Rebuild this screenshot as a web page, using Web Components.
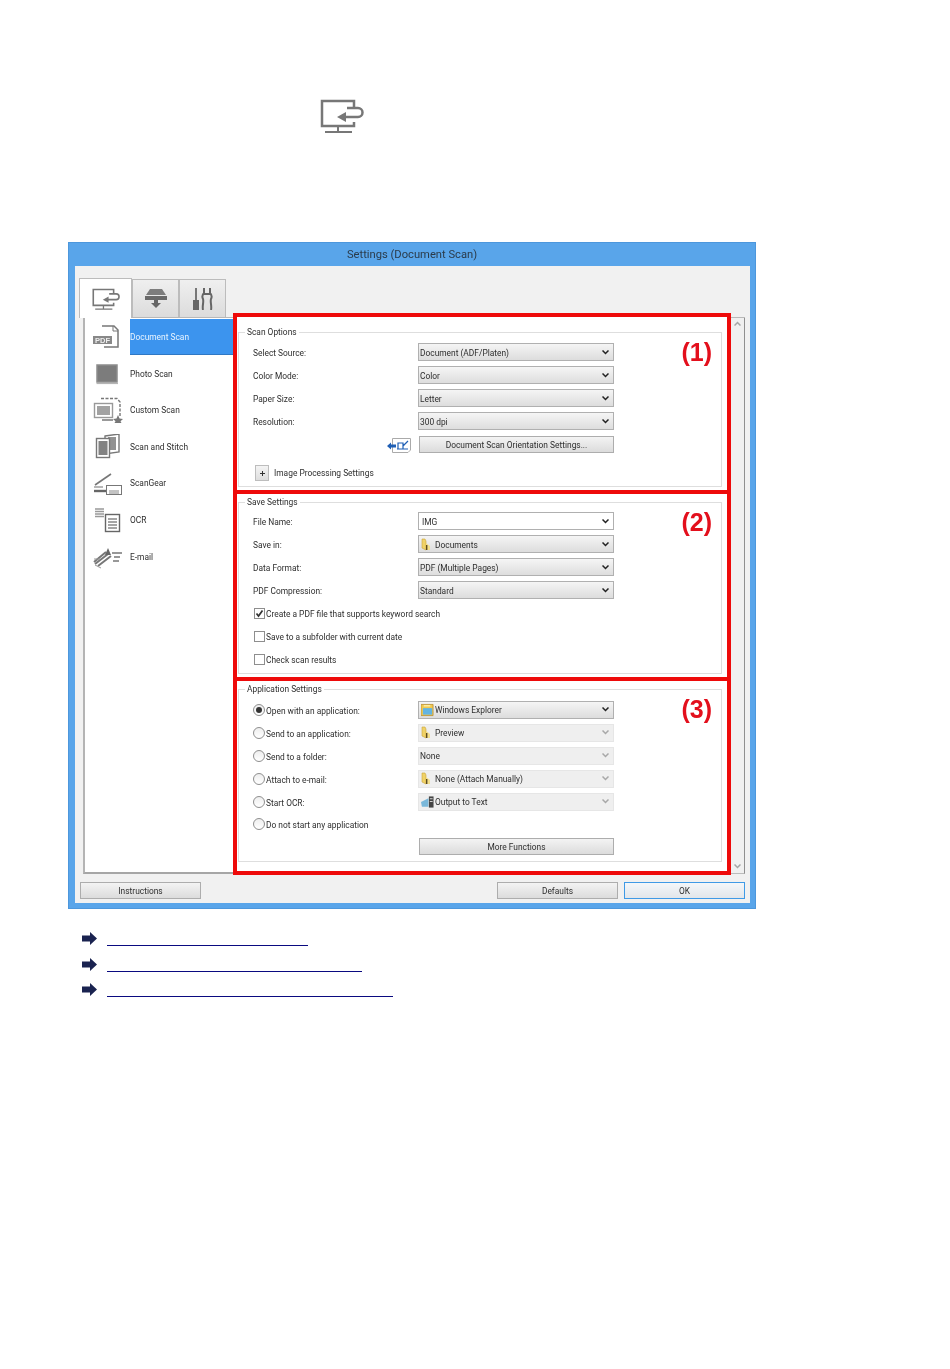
<!DOCTYPE html>
<html lang="en">
<head>
<meta charset="utf-8">
<title>Settings (Document Scan)</title>
<style>
  html, body { margin: 0; background: #fff; }
  body { font: 8.4px Roboto, "Liberation Sans", Arial, sans-serif; color: #2e2e2e; height: 1369px; overflow: hidden; }
</style>
</head>
<body>
<scan-page>
  <settings-window heading="Settings (Document Scan)">
    <side-item slot="side" icon="pdf" selected>Document Scan</side-item>
    <side-item slot="side" icon="photo">Photo Scan</side-item>
    <side-item slot="side" icon="custom">Custom Scan</side-item>
    <side-item slot="side" icon="stitch">Scan and Stitch</side-item>
    <side-item slot="side" icon="gear">ScanGear</side-item>
    <side-item slot="side" icon="ocr">OCR</side-item>
    <side-item slot="side" icon="email">E-mail</side-item>

    <scan-section heading="Scan Options" num="(1)" style="height:181px;--top:8.5px;--gap:2px;--num:21px">
      <scan-field value="Document (ADF/Platen)">Select Source:</scan-field>
      <scan-field value="Color">Color Mode:</scan-field>
      <scan-field value="Letter">Paper Size:</scan-field>
      <scan-field value="300 dpi">Resolution:</scan-field>
      <scan-field action="Document Scan Orientation Settings..." icon="orient"></scan-field>
      <expand-row>Image Processing Settings</expand-row>
    </scan-section>

    <scan-section heading="Save Settings" num="(2)" style="height:191px;margin-top:-4px;--top:1.5px;--gap:1px;--num:14px">
      <scan-field value="IMG" editable>File Name:</scan-field>
      <scan-field value="Documents" icon="folder">Save in:</scan-field>
      <scan-field value="PDF (Multiple Pages)">Data Format:</scan-field>
      <scan-field value="Standard">PDF Compression:</scan-field>
      <scan-option type="check" checked>Create a PDF file that supports keyword search</scan-option>
      <scan-option type="check">Save to a subfolder with current date</scan-option>
      <scan-option type="check">Check scan results</scan-option>
    </scan-section>

    <scan-section heading="Application Settings" num="(3)" style="height:198px;margin-top:-4px;--top:1.5px;--gap:2px;--num:14px;--bottom:9px">
      <scan-field value="Windows Explorer" icon="explorer"><scan-option type="radio" checked>Open with an application:</scan-option></scan-field>
      <scan-field value="Preview" icon="folder" disabled><scan-option type="radio">Send to an application:</scan-option></scan-field>
      <scan-field value="None" disabled><scan-option type="radio">Send to a folder:</scan-option></scan-field>
      <scan-field value="None (Attach Manually)" icon="folder" disabled><scan-option type="radio">Attach to e-mail:</scan-option></scan-field>
      <scan-field value="Output to Text" icon="text" disabled><scan-option type="radio">Start OCR:</scan-option></scan-field>
      <scan-option type="radio">Do not start any application</scan-option>
      <scan-field action="More Functions" style="margin-top:-1px"></scan-field>
    </scan-section>

    <push-button slot="footer" style="margin-right:auto">Instructions</push-button>
    <push-button slot="footer">Defaults</push-button>
    <push-button slot="footer" primary>OK</push-button>
  </settings-window>
  <related-link style="--w:201px"></related-link>
  <related-link style="--w:255px"></related-link>
  <related-link style="--w:286px"></related-link>
</scan-page>

<script>
const ICONS = {
  monitor: `<svg width="44" height="34" viewBox="0 0 44 34" fill="none" stroke="#777" stroke-width="2.5">
    <path d="M34 8V2H2V27H34V23"/><path d="M18 27V33M5 33H32" stroke-width="2"/>
    <path d="M27 9H38a4.5 4.5 0 0 1 0 9H24"/><path d="M17 18L26 13V23Z" fill="#777" stroke="none"/></svg>`,
  scanner: `<svg width="24" height="20" viewBox="0 0 24 20">
    <path d="M6 0H18L22 6H2Z" fill="#7d7d7d"/><rect x="1" y="7" width="22" height="4" fill="#6a6a6a"/>
    <rect x="10" y="11" width="4" height="4" fill="#666"/><path d="M7 14H17L12 19Z" fill="#666"/></svg>`,
  tools: `<svg width="20" height="23" viewBox="0 0 20 23">
    <rect x="0" y="13" width="6" height="10" fill="#666"/><rect x="2" y="1" width="2" height="12" fill="#777"/>
    <path d="M11 1V6C9 8 9 10 10 12C11 15 9 19 10 23M17 1V6C19 8 19 10 18 12C17 15 19 19 18 23M11 7H17" fill="none" stroke="#666" stroke-width="2"/></svg>`,
  pdf: `<svg width="32" height="26" viewBox="0 0 32 26">
    <path d="M10 2H22L26 6V23H12" fill="#fff" stroke="#777" stroke-width="1.5"/><path d="M21 2V7H26" fill="none" stroke="#777"/>
    <rect x="1" y="12" width="19" height="8" fill="#888"/>
    <text x="10.5" y="18.5" font-family="Liberation Sans" font-size="7.5" font-weight="bold" fill="#eee" text-anchor="middle">PDF</text></svg>`,
  photo: `<svg width="32" height="26" viewBox="0 0 32 26">
    <rect x="5" y="4" width="20" height="17" fill="#7c7c7c" stroke="#8c8c8c" stroke-width="1.5"/><path d="M4.5 22.5H26" stroke="#b5b5b5" stroke-width="1.2"/></svg>`,
  custom: `<svg width="32" height="26" viewBox="0 0 32 26" fill="none" stroke="#777">
    <path d="M9 1.5H25L28 5V20" stroke-width="1.4" stroke-dasharray="3 1.5"/>
    <rect x="2.5" y="6.5" width="18" height="14" fill="#fff" stroke="#999" stroke-width="1.4"/><rect x="5" y="9" width="13" height="9" fill="#a2a2a2" stroke="none"/>
    <path d="M10 23H21" stroke="#999" stroke-width="2"/><path d="M26 18L27.5 21.5L31 22L28.5 24.2L29.5 26H22.5L23.5 24.2L21 22L24.5 21.5Z" fill="#777" stroke="none"/></svg>`,
  stitch: `<svg width="32" height="26" viewBox="0 0 32 26">
    <path d="M13 2L27 0V18L13 20Z" fill="#fff" stroke="#777" stroke-width="1.4"/><rect x="16" y="3" width="8" height="13" fill="#929292"/>
    <rect x="4.5" y="4.5" width="13" height="19" fill="#fff" stroke="#777" stroke-width="1.4"/><rect x="6.5" y="7" width="9" height="14" fill="#828282"/></svg>`,
  gear: `<svg width="32" height="26" viewBox="0 0 32 26" fill="none">
    <path d="M3 14L19 3" stroke="#777" stroke-width="1.6"/><path d="M2 16L11 16" stroke="#999" stroke-width="1.4"/>
    <path d="M2 20H15" stroke="#666" stroke-width="2.4"/><rect x="14.5" y="14.5" width="15" height="9" fill="#fff" stroke="#777"/>
    <path d="M17 20H27M17 22H27" stroke="#888"/></svg>`,
  ocr: `<svg width="32" height="26" viewBox="0 0 32 26" fill="none">
    <path d="M3 2H12M3 4.5H12M3 7H12M3 9.5H12" stroke="#999" stroke-width="1.5"/>
    <rect x="13.5" y="7.5" width="14" height="17" fill="#fff" stroke="#666" stroke-width="1.4"/>
    <path d="M16 12H25M16 15H25M16 18H25M16 21H25" stroke="#888" stroke-width="1.4"/></svg>`,
  email: `<svg width="32" height="26" viewBox="0 0 32 26" fill="none">
    <path d="M2 18L14 8M6 22L19 12M3 20L16 10" stroke="#777" stroke-width="2"/><path d="M16 4L19 11H13Z" fill="#666"/>
    <path d="M20 9H30M22 13H28M21 17H27" stroke="#777" stroke-width="1.4"/><path d="M2 15H8M3 21L9 24" stroke="#999"/></svg>`,
  folder: `<svg width="12" height="13" viewBox="0 0 12 13">
    <path d="M1 1H4L5 3V12L1 10Z" fill="#f0d267" stroke="#c9a43b" stroke-width=".6"/><path d="M5 5L9 8V12H5Z" fill="#f4e08f"/><rect x="5" y="7" width="1.4" height="5" fill="#5a4a20"/></svg>`,
  explorer: `<svg width="13" height="14" viewBox="0 0 14 14">
    <path d="M0 1H13V13H0Z" fill="#f2c94f" stroke="#b48a2a" stroke-width=".8"/><rect x="2" y="5" width="10" height="7" fill="#62b4e2"/><path d="M3 2.5H10" stroke="#fff3b0" stroke-width="1.4"/></svg>`,
  text: `<svg width="13" height="12" viewBox="0 0 14 12">
    <path d="M0 6L8 2V11H1Z" fill="#7ab8da"/><rect x="8.5" y="0" width="5" height="12" fill="#444"/><rect x="9.5" y="2" width="3" height="1" fill="#ddd"/><rect x="9.5" y="5" width="3" height="1" fill="#ddd"/></svg>`,
  orient: `<svg width="24" height="16" viewBox="0 0 24 16" style="margin-top:3px">
    <path d="M5.5 .5H23.5V12L21 14.5H5.5Z" fill="#fff" stroke="#aaa"/>
    <path d="M0 8L4 4.5V6.5H9V9.5H4V11.5Z" fill="#1f5fb5"/>
    <path d="M10 11H21M11 11V5H16V11M16 8L21 3" fill="none" stroke="#1f5fb5" stroke-width="1.2"/></svg>`,
  arrow: `<svg width="15" height="13" viewBox="0 0 15 13"><path d="M0 3.5H8V0L15 6.5L8 13V9.5H0Z" fill="#1a2350"/></svg>`,
  chevron: `<svg width="7" height="5" viewBox="0 0 7 5"><path d="M.5 .5L3.5 3.5L6.5 .5" fill="none" stroke="currentColor" stroke-width="1.5"/></svg>`,
  plus: `<svg width="7" height="7" viewBox="0 0 7 7"><path d="M3.5 1V6M1 3.5H6" stroke="#333"/></svg>`,
  tick: `<svg width="9" height="9" viewBox="0 0 9 9"><path d="M1.5 4.5L3.5 7L7.5 1.5" fill="none" stroke="#333" stroke-width="1.7"/></svg>`,
};

// all the small elements look alike: a template string and a shadow root
function shadow(el, html) {
  el.attachShadow({ mode: "open" }).innerHTML = html;
}

class ScanPage extends HTMLElement {
  connectedCallback() {
    shadow(this, `<style>
      :host { display: block; width: 950px; }
      .top { height: 242px; padding: 99px 0 0 320px; box-sizing: border-box; filter: blur(.35px); }
    </style>
    <div class="top">${ICONS.monitor}</div>
    <slot></slot>`);
  }
}

class SettingsWindow extends HTMLElement {
  connectedCallback() {
    shadow(this, `<style>
      :host { display: block; width: 688px; height: 667px; margin: 0 0 23px 68px; box-sizing: border-box;
        background: #59a5ea; border: 1px solid #4d97dc; filter: blur(.35px); }
      .title { height: 23px; display: flex; align-items: center; justify-content: center; font-size: 11.2px; color: #2b3b4a; }
      .client { width: 675px; height: 637px; margin-left: 6px; box-sizing: border-box; background: #f1f1f1; padding: 11px 5px 0; }
      .tabs { display: flex; height: 40px; align-items: flex-end; margin-left: -1px; position: relative; z-index: 1; }
      .tab { box-sizing: border-box; display: flex; align-items: center; justify-content: center; height: 38px; width: 47px;
        background: linear-gradient(#efefef, #dcdcdc); border: 1px solid #bcbcbc; border-bottom: 0; }
      .tab.on { width: 53px; height: 40px; background: #fff; margin-bottom: -1px; }
      .tab.on svg { width: 28px; height: 22px; }
      .panel { display: flex; width: 662px; height: 557px; margin-left: 3px; box-sizing: border-box; background: #fff;
        border-top: 1px solid #b8b8b8; }
      .side { width: 150px; box-sizing: border-box; padding-top: 1px; border-left: 2px solid #b4b4b4; border-bottom: 2px solid #a6a6a6; }
      .main { width: 498px; margin-top: -5px; position: relative; }
      .bar { width: 14px; box-sizing: border-box; background: #f0f0f0; border-right: 1px solid #8f8f8f; display: flex; flex-direction: column;
        justify-content: space-between; align-items: center; padding: 3px 0 4px; color: #a5a5a5; border-bottom: 1px solid #bbb; }
      .bar svg:first-child { transform: rotate(180deg); }
      .foot { display: flex; gap: 6px; margin-top: 8px; }
    </style>
    <div class="title">${this.getAttribute("heading")}</div>
    <div class="client">
      <div class="tabs">
        <div class="tab on">${ICONS.monitor}</div>
        <div class="tab">${ICONS.scanner}</div>
        <div class="tab">${ICONS.tools}</div>
      </div>
      <div class="panel">
        <div class="side"><slot name="side"></slot></div>
        <div class="main"><slot></slot></div>
        <div class="bar">${ICONS.chevron}${ICONS.chevron}</div>
      </div>
      <div class="foot"><slot name="footer"></slot></div>
    </div>`);
  }
}

class SideItem extends HTMLElement {
  connectedCallback() {
    shadow(this, `<style>
      :host { display: grid; grid-template-columns: 45px 1fr; height: 36.6px; align-items: stretch; }
      .ico { display: flex; align-items: center; justify-content: center; }
      .lab { display: flex; align-items: center; margin-bottom: .6px; }
      :host([selected]) .lab { background: #3c94ee; color: #e8f4ff; border-bottom: 1px solid #2f78c4; }
    </style>
    <div class="ico">${ICONS[this.getAttribute("icon")]}</div>
    <div class="lab"><slot></slot></div>`);
  }
}

class ScanSection extends HTMLElement {
  connectedCallback() {
    shadow(this, `<style>
      :host { display: block; position: relative; box-sizing: border-box; border: 4px solid #ee0a0a; background: #fff; }
      fieldset { box-sizing: border-box; height: calc(100% - var(--top) - var(--bottom, 3px)); margin: var(--top) 5px 0 1px; min-width: 0;
        border: 1px solid #dedede; padding: var(--gap) 0 0 14px; }
      legend { padding: 0 2px; margin-left: -8px; line-height: 13px; }
      .num { position: absolute; right: 15px; top: var(--num); font: bold 25px/28px "Liberation Sans", Arial, sans-serif; color: #e30f1c; }
    </style>
    <fieldset><legend>${this.getAttribute("heading")}</legend><slot></slot></fieldset>
    <div class="num">${this.getAttribute("num")}</div>`);
  }
}

class ScanField extends HTMLElement {
  connectedCallback() {
    const icon = this.getAttribute("icon");
    const action = this.getAttribute("action");
    const control = action
      ? `<div class="act">${action}</div>`
      : `<div class="sel">${icon ? `<span class="i">${ICONS[icon]}</span>` : ""}<span class="v">${this.getAttribute("value")}</span><span class="chev">${ICONS.chevron}</span></div>`;
    shadow(this, `<style>
      :host { display: grid; grid-template-columns: 165px 196px; height: 23px; align-items: center; }
      .lead { display: flex; justify-content: flex-end; padding-right: 7px; }
      .plain { display: block; padding-top: 1px; }
      .sel { box-sizing: border-box; height: 18px; display: flex; align-items: center; padding-left: 1px; border: 1px solid #b0b0b0;
        background: linear-gradient(#f5f5f5, #dddddd); }
      .v { padding-top: 1px; }
      .i { flex: none; width: 14px; margin-left: 1px; display: flex; align-items: center; }
      .chev { margin-left: auto; margin-right: 4px; display: flex; color: #222; }
      :host([editable]) .sel { background: #fff; padding-left: 3px; }
      :host([disabled]) .sel { background: #efefef; border-color: #e6e6e6; }
      :host([disabled]) .chev { color: #a8a8a8; }
      .act { box-sizing: border-box; height: 17px; margin-left: 1px; width: 195px; padding-top: 1px; display: flex; align-items: center; justify-content: center;
        border: 1px solid #adadad; background: linear-gradient(#f3f3f3, #dcdcdc); }
    </style>
    ${action && icon ? `<div class="lead">${ICONS[icon]}</div>` : `<div class="plain"><slot></slot></div>`}
    ${control}`);
  }
}

class ScanOption extends HTMLElement {
  connectedCallback() {
    const radio = this.getAttribute("type") === "radio";
    const on = this.hasAttribute("checked");
    const mark = radio ? (on ? '<i class="dot"></i>' : "") : (on ? ICONS.tick : "");
    shadow(this, `<style>
      :host { display: flex; align-items: center; height: 23px; gap: 1px; }
      .box { box-sizing: border-box; width: 11px; height: 11px; margin-left: 1px; border: 1px solid #8e8e8e; background: #fff;
        display: flex; align-items: center; justify-content: center; }
      .box.r { border-radius: 50%; width: 12px; height: 12px; margin-left: 0; background: linear-gradient(#eee, #fff); }
      .dot { width: 6px; height: 6px; border-radius: 50%; background: #333; }
      .t { padding-top: 1px; }
    </style>
    <span class="box ${radio ? "r" : ""}">${mark}</span><span class="t"><slot></slot></span>`);
  }
}

class ExpandRow extends HTMLElement {
  connectedCallback() {
    shadow(this, `<style>
      :host { display: flex; align-items: center; gap: 5px; height: 23px; margin: 6px 0 0 2px; }
      .b { box-sizing: border-box; width: 14px; height: 16px; display: flex; align-items: center; justify-content: center;
        background: linear-gradient(#f4f4f4, #dedede); border: 1px solid #bdbdbd; }
    </style>
    <span class="b">${ICONS.plus}</span><slot></slot>`);
  }
}

class PushButton extends HTMLElement {
  connectedCallback() {
    shadow(this, `<style>
      :host { display: flex; box-sizing: border-box; width: 121px; height: 17px; align-items: center; justify-content: center;
        border: 1px solid #adadad; background: linear-gradient(#f3f3f3, #dcdcdc); }
      :host([primary]) { border-color: #3f9ae6; background: linear-gradient(#f4f7fa, #e2e6ea); }
    </style>
    <slot></slot>`);
  }
}

class RelatedLink extends HTMLElement {
  connectedCallback() {
    shadow(this, `<style>
      :host { display: flex; height: 25.5px; margin-left: 82px; gap: 10px; }
      a { display: block; width: var(--w); height: 13px; border-bottom: 1px solid #0a0a80; }
    </style>
    ${ICONS.arrow}<a href="#"></a>`);
  }
}

customElements.define("scan-page", ScanPage);
customElements.define("settings-window", SettingsWindow);
customElements.define("side-item", SideItem);
customElements.define("scan-section", ScanSection);
customElements.define("scan-field", ScanField);
customElements.define("scan-option", ScanOption);
customElements.define("expand-row", ExpandRow);
customElements.define("push-button", PushButton);
customElements.define("related-link", RelatedLink);
</script>
</body>
</html>
